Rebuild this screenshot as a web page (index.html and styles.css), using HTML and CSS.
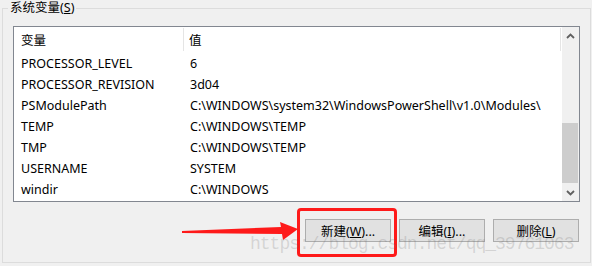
FILE: index.html
```html
<!DOCTYPE html>
<html lang="zh-CN">
<head>
    <meta charset="UTF-8">
    <title>系统变量</title>
    <link rel="stylesheet" href="styles.css">
</head>
<body>
    <fieldset class="group">
        <legend>系统变量(<u>S</u>)</legend>

        <div class="listbox">
            <div class="table">
                <div class="head">
                    <div class="cell name">变量</div>
                    <div class="cell value">值</div>
                </div>
                <div class="row"><div class="cell name">PROCESSOR_LEVEL</div><div class="cell value">6</div></div>
                <div class="row"><div class="cell name">PROCESSOR_REVISION</div><div class="cell value">3d04</div></div>
                <div class="row"><div class="cell name">PSModulePath</div><div class="cell value">C:\WINDOWS\system32\WindowsPowerShell\v1.0\Modules\</div></div>
                <div class="row"><div class="cell name">TEMP</div><div class="cell value">C:\WINDOWS\TEMP</div></div>
                <div class="row"><div class="cell name">TMP</div><div class="cell value">C:\WINDOWS\TEMP</div></div>
                <div class="row"><div class="cell name">USERNAME</div><div class="cell value">SYSTEM</div></div>
                <div class="row"><div class="cell name">windir</div><div class="cell value">C:\WINDOWS</div></div>
            </div>
            <div class="scrollbar">
                <div class="sb-btn">
                    <svg width="9" height="6" viewBox="0 0 9 6"><path d="M1 5 L4.5 1.5 L8 5" fill="none" stroke="#606060" stroke-width="1.8"/></svg>
                </div>
                <div class="track"><div class="thumb"></div></div>
                <div class="sb-btn">
                    <svg width="9" height="6" viewBox="0 0 9 6"><path d="M1 1 L4.5 4.5 L8 1" fill="none" stroke="#606060" stroke-width="1.8"/></svg>
                </div>
            </div>
        </div>

        <div class="buttons">
            <button>新建(<u>W</u>)...</button>
            <button>编辑(<u>I</u>)...</button>
            <button>删除(<u>L</u>)</button>
        </div>
    </fieldset>

    <!-- annotation drawn over the screenshot -->
    <div class="mark"></div>
    <svg class="arrow" width="592" height="266" viewBox="0 0 592 266">
        <polygon points="182,231 281,227 280,222 298,229 283,240 282,234 182,233" fill="#fe1a1a"/>
    </svg>
    <div class="watermark">https://blog.csdn.net/qq_39761063</div>
</body>
</html>
```

FILE: styles.css
```css
body {
    margin: 0;
    width: 592px;
    height: 266px;
    background: #f0f0f0;
    font-family: "Noto Sans", "Noto Sans CJK SC", sans-serif;
    font-size: 12px;
    color: #000;
    position: relative;
    overflow: hidden;
}

.group {
    margin: 0 1px 0 2px;
    padding: 10px 10px 20px 10px;
    border: 1px solid #dcdcdc;
    min-width: 0;
}

.group legend {
    margin-left: -5px;
    padding: 0 2px;
    line-height: 16px;
    font-size: 12.5px;
}

.listbox {
    display: flex;
    height: 174px;
    border: 1px solid #828790;
    background: #fff;
    font-size: 12.5px;
}

.table {
    flex: 1;
    padding-top: 1px;
}

.head,
.row {
    display: flex;
}

.head {
    height: 25px;
}

.head .cell {
    border-right: 1px solid #e5e5e5;
    height: 23px;
    line-height: 25px;
}

.row .cell {
    line-height: 21px;
    height: 21px;
    white-space: nowrap;
}

.cell.name {
    width: 162px;
    padding-left: 7px;
}

.cell.value {
    flex: 1;
    padding-left: 5px;
}

.row .cell.name {
    width: 163px;
}

.row .cell.value {
    padding-left: 6px;
}

.scrollbar {
    width: 17px;
    margin-left: 1px;
    background: #f0f0f0;
    display: flex;
    flex-direction: column;
}

.sb-btn {
    height: 17px;
    display: flex;
    align-items: center;
    justify-content: center;
}

.track {
    flex: 1;
}

.thumb {
    margin: 79px 1px 0 0;
    height: 60px;
    background: #cdcdcd;
}

.buttons {
    display: flex;
    justify-content: flex-end;
    gap: 8px;
    margin: 17px 1px 0 0;
}

.buttons button {
    width: 86px;
    height: 23px;
    padding: 0;
    background: #e1e1e1;
    border: 1px solid #adadad;
    font: inherit;
    font-size: 12.5px;
    color: #000;
}

.mark {
    position: absolute;
    left: 297px;
    top: 208px;
    width: 94px;
    height: 43px;
    border: 3px solid #fe1a1a;
    border-radius: 4px;
}

.arrow {
    position: absolute;
    left: 0;
    top: 0;
}

.watermark {
    position: absolute;
    left: 250px;
    top: 235px;
    font-family: "Liberation Mono", monospace;
    font-size: 18px;
    line-height: 18px;
    letter-spacing: -1px;
    color: rgba(110, 110, 110, 0.22);
    white-space: nowrap;
}
```
